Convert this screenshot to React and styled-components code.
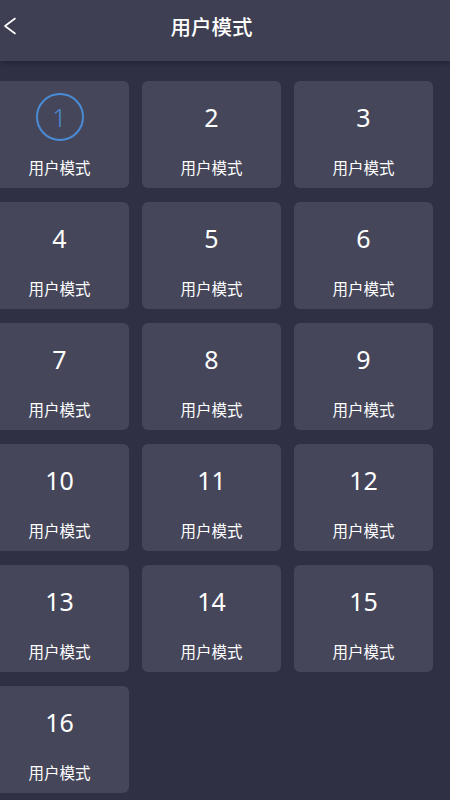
import styled, { createGlobalStyle } from "styled-components";

const GlobalStyle = createGlobalStyle`
  html, body {
    margin: 0;
    padding: 0;
    background: #2f3044;
    font-family: "Noto Sans", "Noto Sans CJK SC", sans-serif;
  }
`;

const modes = Array.from({ length: 16 }, (_, i) => i + 1);

const App = () => {
  const active = 1;

  return (
    <Page>
      <GlobalStyle />
      <Header>
        <BackButton>
          <svg width="16" height="22" viewBox="0 0 16 22" fill="none">
            <path
              d="M13 3.5L3 11L13 18.5"
              stroke="#ffffff"
              strokeWidth="1.6"
              strokeLinecap="round"
              strokeLinejoin="round"
            />
          </svg>
        </BackButton>
        <Title>用户模式</Title>
      </Header>

      <Grid>
        {modes.map((n) => (
          <Card key={n}>
            <NumberSlot>
              <Number isActive={n === active}>{n}</Number>
            </NumberSlot>
            <Label>用户模式</Label>
          </Card>
        ))}
      </Grid>
    </Page>
  );
};

export default App;

const Page = styled.div`
  width: 450px;
  min-height: 800px;
  background: #2f3044;
  overflow: hidden;
`;

const Header = styled.div`
  position: relative;
  height: 61px;
  background: #3e3f52;
  display: flex;
  align-items: center;
  justify-content: center;
  box-shadow: 0 2px 5px rgba(20, 20, 32, 0.45);
`;

const BackButton = styled.div`
  position: absolute;
  left: 2px;
  top: 15px;
  width: 16px;
  height: 22px;
  display: flex;
`;

const Title = styled.div`
  color: #ffffff;
  font-family: "Noto Sans CJK SC", sans-serif;
  font-size: 20.5px;
  font-weight: 500;
  margin-top: -9px;
  margin-right: 27px;
`;

const Grid = styled.div`
  display: grid;
  grid-template-columns: repeat(3, 139px);
  column-gap: 13px;
  row-gap: 14px;
  padding-top: 20px;
  margin-left: -10px;
`;

const Card = styled.div`
  height: 107px;
  border-radius: 6px;
  background: #45465a;
  display: flex;
  flex-direction: column;
  align-items: center;
  padding-top: 12px;
  box-sizing: border-box;
`;

const NumberSlot = styled.div`
  height: 48px;
  display: flex;
  align-items: center;
  justify-content: center;
`;

const Number = styled.div`
  width: 48px;
  height: 48px;
  box-sizing: border-box;
  border-radius: 50%;
  border: 2px solid ${(props) => (props.isActive ? "#4a8bd6" : "transparent")};
  color: ${(props) => (props.isActive ? "#4a8bd6" : "#ffffff")};
  font-family: "Noto Sans", sans-serif;
  font-size: 25px;
  font-weight: ${(props) => (props.isActive ? 300 : 400)};
  display: flex;
  align-items: center;
  justify-content: center;
  line-height: 1;
`;

const Label = styled.div`
  margin-top: 16px;
  color: #ffffff;
  font-family: "Noto Sans CJK SC", sans-serif;
  font-size: 15.5px;
  line-height: 20px;
`;
